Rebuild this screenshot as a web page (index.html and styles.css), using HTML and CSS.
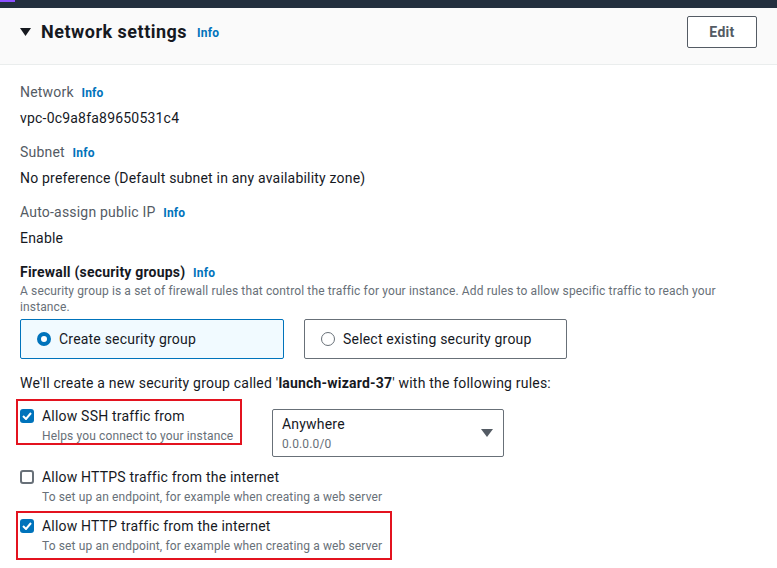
FILE: index.html
```html
<!DOCTYPE html>
<html lang="en">
<head>
<meta charset="utf-8">
<title>Network settings</title>
<link rel="stylesheet" href="styles.css">
</head>
<body>
<div class="topbar"></div>
<div class="header">
  <div class="title">
    <svg class="caret" width="11" height="8" viewBox="0 0 11 8"><path d="M0 0H11L5.5 8Z" fill="#16191f"/></svg>
    <h2>Network settings</h2>
    <a class="info">Info</a>
  </div>
  <button class="btn">Edit</button>
</div>
<div class="content">
  <div class="field">
    <div class="label">Network <a class="info">Info</a></div>
    <div class="value">vpc-0c9a8fa89650531c4</div>
  </div>
  <div class="field">
    <div class="label">Subnet <a class="info">Info</a></div>
    <div class="value">No preference (Default subnet in any availability zone)</div>
  </div>
  <div class="field">
    <div class="label">Auto-assign public IP <a class="info">Info</a></div>
    <div class="value">Enable</div>
  </div>
  <div class="firewall">
    <div class="label strong">Firewall (security groups) <a class="info">Info</a></div>
    <div class="desc">A security group is a set of firewall rules that control the traffic for your instance. Add rules to allow specific traffic to reach your instance.</div>
    <div class="tiles">
      <div class="tile selected"><span class="radio on"></span>Create security group</div>
      <div class="tile"><span class="radio"></span>Select existing security group</div>
    </div>
  </div>
  <p class="note">We'll create a new security group called '<b>launch-wizard-37</b>' with the following rules:</p>
  <div class="rule-row ssh">
    <div class="annot annot-ssh">
      <div class="check-item">
        <span class="cb checked"><svg width="10" height="8" viewBox="0 0 10 8"><path d="M1 4L4 7L9 1" fill="none" stroke="#fff" stroke-width="2"/></svg></span>
        <div>
          <div class="cb-label">Allow SSH traffic from</div>
          <div class="cb-desc">Helps you connect to your instance</div>
        </div>
      </div>
    </div>
    <div class="select">
      <div>
        <div class="sel-main">Anywhere</div>
        <div class="sel-sub">0.0.0.0/0</div>
      </div>
      <svg width="12" height="8" viewBox="0 0 12 8"><path d="M0 0H12L6 8Z" fill="#545b64"/></svg>
    </div>
  </div>
  <div class="check-item https">
    <span class="cb"></span>
    <div>
      <div class="cb-label">Allow HTTPS traffic from the internet</div>
      <div class="cb-desc">To set up an endpoint, for example when creating a web server</div>
    </div>
  </div>
  <div class="annot annot-http">
    <div class="check-item">
      <span class="cb checked"><svg width="10" height="8" viewBox="0 0 10 8"><path d="M1 4L4 7L9 1" fill="none" stroke="#fff" stroke-width="2"/></svg></span>
      <div>
        <div class="cb-label">Allow HTTP traffic from the internet</div>
        <div class="cb-desc">To set up an endpoint, for example when creating a web server</div>
      </div>
    </div>
  </div>
</div>
</body>
</html>
```
FILE: styles.css
```css
* { box-sizing: border-box; }
body {
  margin: 0;
  background: #fff;
  font-family: Roboto, "Liberation Sans", sans-serif;
  font-size: 14px;
  letter-spacing: 0.2px;
  color: #16191f;
}
.topbar {
  height: 8px;
  background: #232f3e;
  position: relative;
}
.topbar::before {
  content: "";
  position: absolute;
  left: 0;
  top: 0;
  width: 15px;
  height: 2px;
  background: #8c4fff;
}
.header {
  height: 57px;
  background: #fafafa;
  border-bottom: 1px solid #eaeded;
  display: flex;
  justify-content: space-between;
  align-items: flex-start;
  padding: 8px 20px 0 20px;
}
.title {
  display: flex;
  align-items: center;
  height: 31px;
}
.caret { margin-right: 10px; margin-top: 1px; }
.title h2 {
  margin: 0;
  font-size: 18px;
  font-weight: 700;
  letter-spacing: 0.5px;
  color: #16191f;
}
.title .info { margin-left: 10px; margin-top: 3px; }
.info {
  color: #0073bb;
  font-weight: 700;
  font-size: 12px;
  letter-spacing: 0.2px;
  margin-left: 4px;
}
.btn {
  width: 70px;
  height: 32px;
  background: #fff;
  border: 1px solid #545b64;
  border-radius: 2px;
  font-family: inherit;
  font-size: 14px;
  font-weight: 700;
  letter-spacing: 0.3px;
  color: #545b64;
}
.content {
  padding: 17px 20px 0 20px;
}
.field { margin-bottom: 14px; }
.label {
  line-height: 20px;
  color: #545b64;
}
.label.strong { color: #16191f; font-weight: 700; }
.value {
  line-height: 20px;
  margin-top: 5px;
}
.desc {
  font-size: 12px;
  line-height: 16px;
  letter-spacing: 0.13px;
  color: #687078;
  margin-top: 0;
  max-width: 720px;
}
.tiles {
  display: flex;
  gap: 20px;
  margin-top: 4px;
}
.tile {
  width: 263px;
  height: 40px;
  border: 1px solid #687078;
  border-radius: 2px;
  display: flex;
  align-items: center;
  padding-left: 16px;
  gap: 8px;
}
.tile.selected {
  width: 264px;
  background: #f1faff;
  border-color: #0073bb;
}
.radio {
  width: 14px;
  height: 14px;
  border-radius: 50%;
  border: 1px solid #687078;
  background: #fff;
}
.radio.on {
  border: 4px solid #0073bb;
}
.note {
  margin: 14px 0 0 0;
  line-height: 20px;
}
.note b { font-weight: 700; }
.rule-row {
  display: flex;
  align-items: flex-start;
  margin-top: 6px;
}
.annot {
  border: 2px solid #e3131f;
  margin-left: -4px;
  padding: 5px 0 0 2px;
}
.annot-ssh { width: 226px; height: 46px; }
.annot-http { width: 376px; height: 49px; margin-top: 6px; padding-top: 3px; }
.check-item {
  display: flex;
  align-items: flex-start;
  gap: 8px;
}
.cb {
  flex: none;
  width: 14px;
  height: 14px;
  border-radius: 3px;
  border: 2px solid #687078;
  background: #fff;
  margin-top: 3px;
  display: flex;
  align-items: center;
  justify-content: center;
}
.cb.checked {
  border: none;
  background: #0073bb;
}
.cb-label { line-height: 20px; }
.cb-desc {
  font-size: 12px;
  line-height: 16px;
  letter-spacing: 0.13px;
  color: #687078;
  margin-top: 2px;
}
.select {
  width: 232px;
  height: 48px;
  margin-left: 30px;
  margin-top: 10px;
  border: 1px solid #687078;
  border-radius: 2px;
  display: flex;
  align-items: center;
  justify-content: space-between;
  padding: 0 10px 0 9px;
}
.sel-main { line-height: 18px; }
.sel-sub { font-size: 12px; line-height: 16px; letter-spacing: 0.13px; color: #687078; margin-top: 3px; }
.https { margin-top: 10px; }
```
